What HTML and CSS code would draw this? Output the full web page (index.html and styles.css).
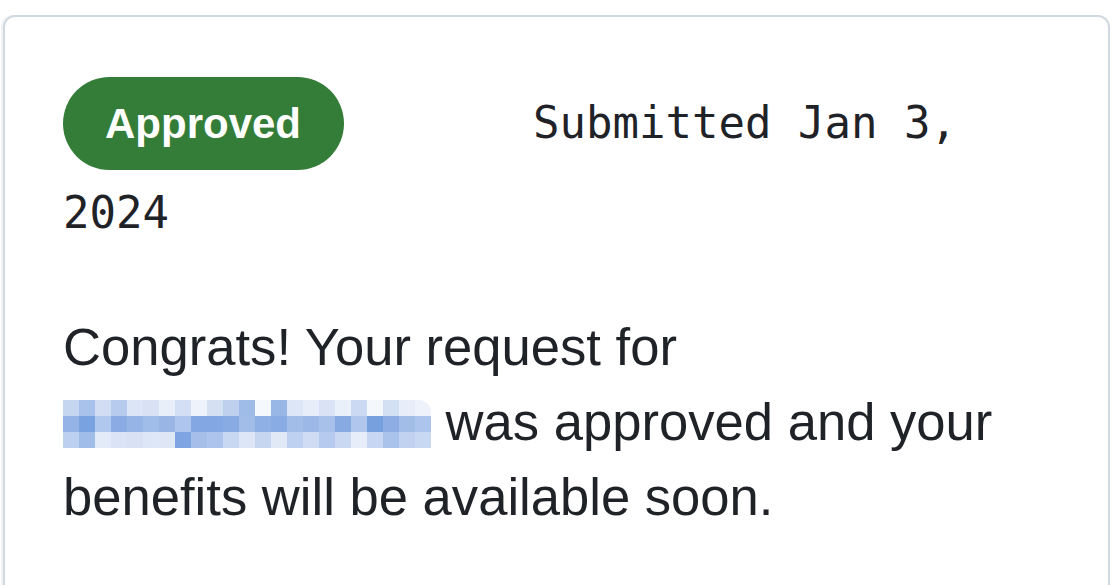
FILE: index.html
```html
<!DOCTYPE html>
<html>
<head>
<meta charset="utf-8">
<link rel="stylesheet" href="styles.css">
</head>
<body>
<div class="card">
  <div class="meta"><span class="badge">Approved</span>Submitted Jan 3, 2024</div>
  <p class="message">Congrats! Your request for <span class="mosaic" aria-label="redacted"><span class="mosaic-grid"><i style="background:#c5d6f0"></i><i style="background:#a9c2ec"></i><i style="background:#d2ddf3"></i><i style="background:#b7cbef"></i><i style="background:#dbe5f6"></i><i style="background:#d8e2f4"></i><i style="background:#e9eff9"></i><i style="background:#d3dff4"></i><i style="background:#edf2fb"></i><i style="background:#d5e1f3"></i><i style="background:#bfd0ef"></i><i style="background:#9fbbe8"></i><i style="background:#f5f8fd"></i><i style="background:#98b7e6"></i><i style="background:#dde6f6"></i><i style="background:#e8eef9"></i><i style="background:#d9e3f5"></i><i style="background:#eaf0fa"></i><i style="background:#cbd9f3"></i><i style="background:#f4f7fc"></i><i style="background:#d3dff3"></i><i style="background:#e8eef9"></i><i style="background:#eef2fa"></i><i style="background:#95b3e6"></i><i style="background:#78a2e0"></i><i style="background:#b0c7ee"></i><i style="background:#8aabe4"></i><i style="background:#97b4e6"></i><i style="background:#a0bce8"></i><i style="background:#98b5e6"></i><i style="background:#aec5ed"></i><i style="background:#82a7e2"></i><i style="background:#82a7e2"></i><i style="background:#89abe3"></i><i style="background:#a3bde9"></i><i style="background:#8fb0e5"></i><i style="background:#8aace4"></i><i style="background:#a3bde9"></i><i style="background:#9bb8e7"></i><i style="background:#a8c1ea"></i><i style="background:#87aae3"></i><i style="background:#b0c6ec"></i><i style="background:#77a0df"></i><i style="background:#8dade4"></i><i style="background:#a3bde9"></i><i style="background:#adc4ec"></i><i style="background:#bdd0f0"></i><i style="background:#a0bce8"></i><i style="background:#e3eaf8"></i><i style="background:#dbe4f6"></i><i style="background:#d8e2f4"></i><i style="background:#dde6f7"></i><i style="background:#dfe7f7"></i><i style="background:#7ea5e2"></i><i style="background:#a5bfea"></i><i style="background:#adc4ec"></i><i style="background:#c8d7f2"></i><i style="background:#dde6f6"></i><i style="background:#c6d6f1"></i><i style="background:#e1e9f7"></i><i style="background:#bfd1f0"></i><i style="background:#cfdcf3"></i><i style="background:#b6caef"></i><i style="background:#cad8f2"></i><i style="background:#e7edf9"></i><i style="background:#c7d6f2"></i><i style="background:#aac3eb"></i><i style="background:#c1d2f0"></i><i style="background:#c8d7f2"></i></span></span> was approved and your benefits will be available soon.</p>
</div>
</body>
</html>
```
FILE: styles.css
```css
html, body {
  margin: 0;
  padding: 0;
  background: #ffffff;
}

body {
  padding: 15px 2px 0 3px;
  color: #1f2328;
  overflow: hidden;
  height: 585px;
  box-sizing: border-box;
}

.card {
  box-sizing: border-box;
  width: 1107px;
  height: 590px;
  border: 2px solid #d1d9e0;
  border-radius: 12px;
  padding: 60px 58px 0 58px;
  background: #ffffff;
  box-shadow: -2px 0 0 0 #f0f2f4;
}

.meta {
  font-family: "DejaVu Sans Mono", "Liberation Mono", monospace;
  font-size: 44px;
  line-height: 86px;
  color: #1f2328;
}

.badge {
  display: inline-block;
  font-family: "Liberation Sans", Arial, sans-serif;
  font-weight: 700;
  font-size: 42px;
  line-height: 93px;
  padding: 0 43px 0 42px;
  margin-right: 189px;
  border-radius: 47px;
  background: #347d39;
  color: #ffffff;
  vertical-align: baseline;
}

.message {
  margin: 53px 0 0 0;
  font-family: "Liberation Sans", Arial, sans-serif;
  font-size: 52.6px;
  line-height: 75px;
  color: #1f2328;
}

.mosaic {
  display: inline-block;
  vertical-align: -8px;
  line-height: 0;
  overflow: hidden;
  border-top-right-radius: 12px;
}

.mosaic-grid {
  display: grid;
  grid-template-columns: repeat(23, 16px);
  grid-auto-rows: 16px;
}

.mosaic-grid i {
  display: block;
}
```
